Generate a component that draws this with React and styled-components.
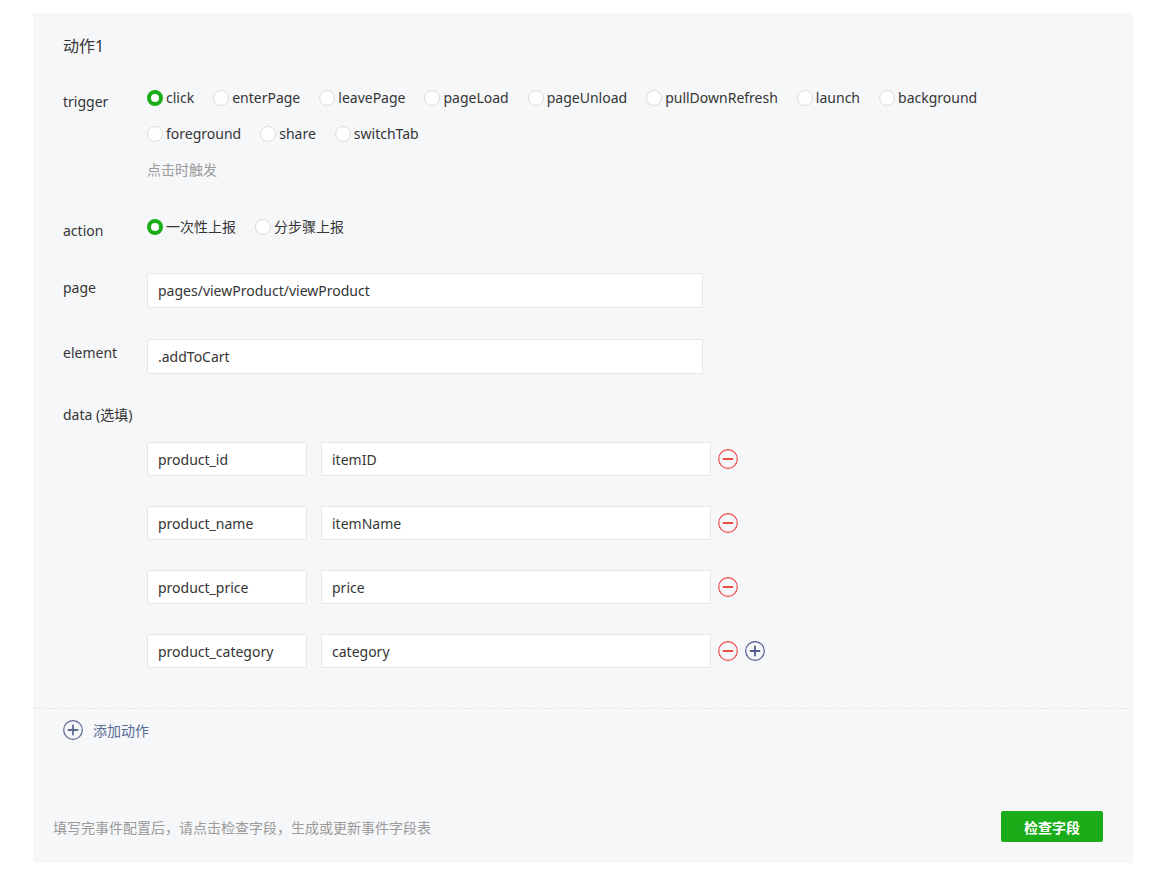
import React from "react";
import styled, { createGlobalStyle } from "styled-components";

const Global = createGlobalStyle`
  html, body { margin: 0; padding: 0; background: #fff; }
  body { font-family: "Noto Sans", "Noto Sans CJK SC", sans-serif; color: #353535; }
  * { box-sizing: border-box; }
`;

const Panel = styled.div`
  width: 1100px;
  margin: 13px 0 10px 33px;
  background: #f6f7f9;
`;

const ActionBlock = styled.section`
  padding: 22px 30px 40px 30px;
  border-bottom: 1px dashed #e4e6ea;
`;

const Title = styled.div`
  font-size: 16px;
  line-height: 22px;
  color: #353535;
`;

const FormRow = styled.div`
  display: grid;
  grid-template-columns: 84px 1fr;
  align-items: start;
  margin-top: ${(p) => p.$gap}px;
`;

const Label = styled.div`
  font-size: 14px;
  line-height: 20px;
  padding-top: ${(p) => p.$offset || 0}px;
  color: #353535;
`;

const Controls = styled.div`
  display: flex;
  flex-direction: column;
`;

const RadioGroup = styled.div`
  display: flex;
  flex-wrap: wrap;
  column-gap: 19px;
  row-gap: 16px;
  max-width: 860px;
`;

const RadioItem = styled.label`
  display: inline-flex;
  align-items: center;
  gap: 3px;
  font-size: 14px;
  line-height: 20px;
  color: #353535;
  cursor: pointer;
`;

const RadioDot = styled.span`
  width: 16px;
  height: 16px;
  border-radius: 50%;
  background: #fff;
  border: ${(p) => (p.$checked ? "4px solid #1aad19" : "1px solid #dcdcdc")};
  flex: none;
`;

const Helper = styled.div`
  font-size: 14px;
  line-height: 20px;
  color: #9a9a9a;
  margin-top: 16px;
`;

const Input = styled.div`
  width: ${(p) => p.$w}px;
  height: ${(p) => p.$h || 35}px;
  background: #fff;
  border: 1px solid #e6e7ea;
  border-radius: 2px;
  padding: 0 10px;
  display: flex;
  align-items: center;
  font-size: 14px;
  color: #353535;
`;

const DataList = styled.div`
  display: flex;
  flex-direction: column;
  gap: 30px;
  margin-top: 17px;
  padding-left: 84px;
`;

const DataRow = styled.div`
  display: flex;
  align-items: center;
`;

const ValueInput = styled(Input)`
  margin-left: 14px;
`;

const IconBtn = styled.span`
  display: inline-flex;
  width: 20px;
  height: 20px;
  margin-left: ${(p) => p.$ml}px;
  cursor: pointer;
`;

const AddRow = styled.div`
  display: flex;
  align-items: center;
  gap: 10px;
  padding: 11px 30px 0 30px;
  height: 31px;
  font-size: 14px;
  color: #576b95;
`;

const Footer = styled.div`
  display: flex;
  justify-content: space-between;
  align-items: center;
  padding: 71px 30px 21px 20px;
`;

const FooterText = styled.div`
  font-size: 14px;
  color: #9a9a9a;
`;

const Button = styled.button`
  width: 102px;
  height: 31px;
  border: none;
  border-radius: 2px;
  background: #1aad19;
  color: #fff;
  font-family: inherit;
  font-size: 14px;
  font-weight: 600;
  cursor: pointer;
`;

const MinusIcon = () => (
  <svg width="20" height="20" viewBox="0 0 20 20">
    <circle cx="10" cy="10" r="9.3" fill="none" stroke="#f04b4b" strokeWidth="1.2" />
    <line x1="5.5" y1="10" x2="14.5" y2="10" stroke="#f04b4b" strokeWidth="1.8" strokeLinecap="round" />
  </svg>
);

const PlusIcon = ({ color = "#4f5d8c" }) => (
  <svg width="20" height="20" viewBox="0 0 20 20">
    <circle cx="10" cy="10" r="9.3" fill="none" stroke={color} strokeWidth="1.2" />
    <line x1="5.5" y1="10" x2="14.5" y2="10" stroke={color} strokeWidth="1.8" strokeLinecap="round" />
    <line x1="10" y1="5.5" x2="10" y2="14.5" stroke={color} strokeWidth="1.8" strokeLinecap="round" />
  </svg>
);

const triggers = [
  "click", "enterPage", "leavePage", "pageLoad", "pageUnload", "pullDownRefresh",
  "launch", "background", "foreground", "share", "switchTab",
];
const actions = ["一次性上报", "分步骤上报"];
const dataRows = [
  ["product_id", "itemID"],
  ["product_name", "itemName"],
  ["product_price", "price"],
  ["product_category", "category"],
];

const Radio = ({ label, checked }) => (
  <RadioItem>
    <RadioDot $checked={checked} />
    {label}
  </RadioItem>
);

export default function App() {
  return (
    <>
      <Global />
      <Panel>
        <ActionBlock>
          <Title>动作1</Title>
          <FormRow $gap={31}>
            <Label $offset={4}>trigger</Label>
            <Controls>
              <RadioGroup>
                {triggers.map((t, i) => (
                  <Radio key={t} label={t} checked={i === 0} />
                ))}
              </RadioGroup>
              <Helper>点击时触发</Helper>
            </Controls>
          </FormRow>
          <FormRow $gap={37}>
            <Label $offset={4}>action</Label>
            <RadioGroup>
              {actions.map((t, i) => (
                <Radio key={t} label={t} checked={i === 0} />
              ))}
            </RadioGroup>
          </FormRow>
          <FormRow $gap={32}>
            <Label $offset={5}>page</Label>
            <Input $w={556}>pages/viewProduct/viewProduct</Input>
          </FormRow>
          <FormRow $gap={31}>
            <Label $offset={4}>element</Label>
            <Input $w={556}>.addToCart</Input>
          </FormRow>
          <FormRow $gap={31}>
            <Label>data (选填)</Label>
          </FormRow>
          <DataList>
            {dataRows.map(([k, v], i) => (
              <DataRow key={k}>
                <Input $w={160} $h={34}>{k}</Input>
                <ValueInput $w={390} $h={34}>{v}</ValueInput>
                <IconBtn $ml={7}><MinusIcon /></IconBtn>
                {i === dataRows.length - 1 && (
                  <IconBtn $ml={7}><PlusIcon /></IconBtn>
                )}
              </DataRow>
            ))}
          </DataList>
        </ActionBlock>
        <AddRow>
          <PlusIcon color="#5a6892" />
          添加动作
        </AddRow>
        <Footer>
          <FooterText>填写完事件配置后，请点击检查字段，生成或更新事件字段表</FooterText>
          <Button>检查字段</Button>
        </Footer>
      </Panel>
    </>
  );
}
